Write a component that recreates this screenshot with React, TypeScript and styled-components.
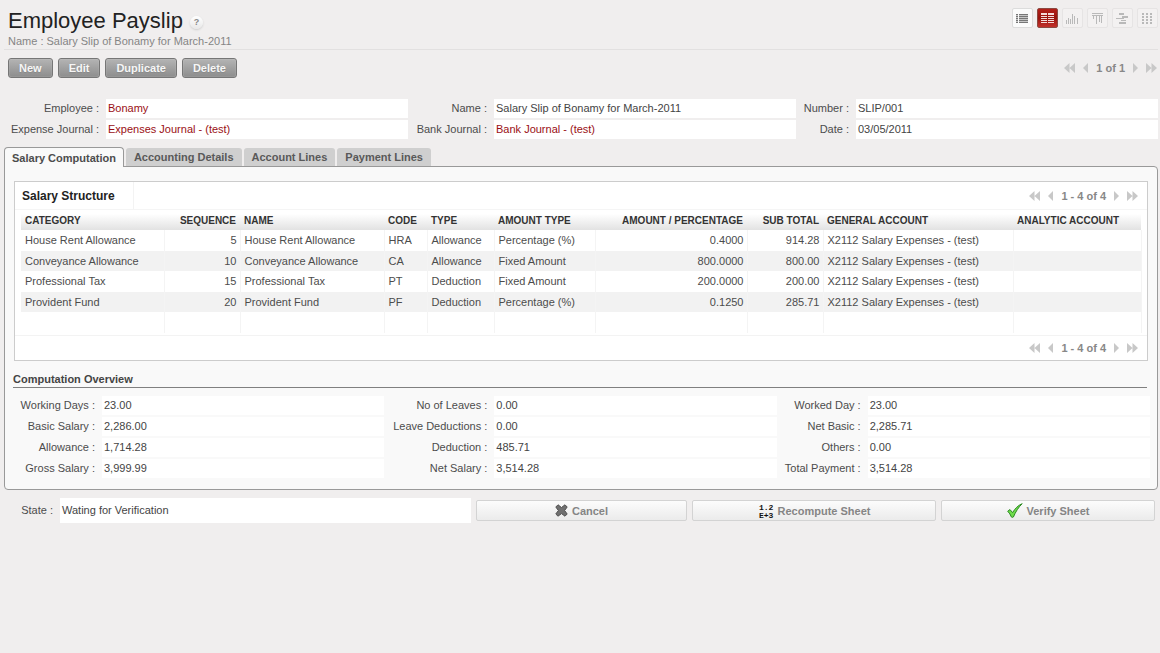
import React from "react";
import styled, { createGlobalStyle, css } from "styled-components";

const GlobalStyle = createGlobalStyle`
  *, *::before, *::after { box-sizing: border-box; }
  body {
    margin: 0;
    background: #f0eeee;
    color: #4c4c4c;
    font-family: "Liberation Sans", Arial, sans-serif;
    font-size: 11px;
    line-height: 13px;
  }
  button { font-family: inherit; cursor: pointer; }
`;

const Page = styled.main`
  display: flex;
  flex-direction: column;
  padding: 0 2px 0 4px;
`;

/* ---------- header ---------- */

const Header = styled.header`
  display: flex;
  justify-content: space-between;
  align-items: flex-start;
  height: 50px;
  padding: 8px 0 0 4px;
  border-bottom: 1px solid #e2e0e0;
`;

const TitleRow = styled.div`
  display: flex;
  align-items: center;
  gap: 7px;
`;

const Title = styled.h1`
  margin: 0;
  font-size: 22px;
  line-height: 26px;
  font-weight: 400;
  color: #222;
`;

const HelpButton = styled.button`
  width: 13px;
  height: 13px;
  margin-top: 2px;
  padding: 0;
  border: 0;
  border-radius: 50%;
  background: linear-gradient(#fff, #e8e8e8);
  box-shadow: 0 1px 2px #ccc;
  color: #888;
  font-size: 9px;
  font-weight: 700;
  line-height: 13px;
`;

const Subtitle = styled.p`
  margin: 0;
  line-height: 14px;
  color: #858585;
`;

const ViewSwitch = styled.nav`
  display: flex;
  gap: 4px;
`;

const ViewButton = styled.button<{ $state: "normal" | "active" | "disabled" }>`
  display: flex;
  align-items: center;
  justify-content: center;
  width: 21px;
  height: 20px;
  padding: 0;
  border: 1px solid #e6e4e4;
  border-radius: 2px;
  background: #f3f1f1;
  color: #b9b9b9;
  ${(p) =>
    p.$state === "normal" &&
    css`
      border-color: #dcdcdc;
      background: #fbfbfb;
      color: #777;
    `}
  ${(p) =>
    p.$state === "active" &&
    css`
      border-color: #8c4a42;
      background: linear-gradient(#b3201a, #98140e 50%, #c3302a);
      color: #f4dcda;
    `}
`;

/* ---------- action bar ---------- */

const ActionBar = styled.div`
  display: flex;
  justify-content: space-between;
  align-items: center;
  height: 20px;
  margin: 8px 0 21px;
  padding: 0 1px 0 4px;
`;

const Actions = styled.div`
  display: flex;
  gap: 5px;
`;

const ActionButton = styled.button`
  height: 20px;
  padding: 0 10px;
  border: 1px solid #767676;
  border-radius: 3px;
  background: linear-gradient(#b4b4b4, #8d8d8d);
  box-shadow: inset 0 0 1px #ddd;
  color: #f6f6f6;
  font-size: 11px;
  font-weight: 700;
  line-height: 18px;
  text-shadow: 0 1px 1px #888;
`;

const PagerBar = styled.div<{ $inset?: boolean }>`
  display: flex;
  align-items: center;
  justify-content: flex-end;
  gap: 8px;
  height: 24px;
  color: #888;
  font-weight: 700;
  padding-right: ${(p) => (p.$inset ? 9 : 0)}px;
`;

const PagerButton = styled.button`
  display: flex;
  padding: 0;
  border: 0;
  background: none;
  color: #c8c8c8;
`;

/* ---------- fields ---------- */

const FieldGrid = styled.div<{ $columns: string }>`
  display: grid;
  grid-template-columns: ${(p) => p.$columns};
  row-gap: 2px;
`;

const FieldLabel = styled.label`
  display: flex;
  align-items: center;
  justify-content: flex-end;
  padding-right: 7px;
  white-space: nowrap;
`;

const FieldValue = styled.output<{ $tall?: boolean }>`
  display: block;
  flex: 1;
  height: ${(p) => (p.$tall ? 25 : 19)}px;
  padding-left: 2px;
  background: #fff;
  line-height: ${(p) => (p.$tall ? 25 : 19)}px;
  color: #444;
  white-space: nowrap;
`;

const RecordLink = styled.a`
  color: #9a0f14;
  text-decoration: none;
`;

/* ---------- tabs ---------- */

const TabList = styled.div`
  display: flex;
  align-items: flex-end;
  gap: 2px;
  height: 20px;
  margin-top: 8px;
  position: relative;
`;

const Tab = styled.button<{ $active?: boolean }>`
  height: 18px;
  padding: 0 8px;
  border: 0;
  border-radius: 3px 3px 0 0;
  background: #cfcfcf;
  color: #595959;
  font-size: 11px;
  font-weight: 700;
  line-height: 18px;
  margin-bottom: 1px;
  ${(p) =>
    p.$active &&
    css`
      height: 20px;
      margin-bottom: 0;
      padding: 0 7px;
      border: 1px solid #999;
      border-bottom: 0;
      border-radius: 4px 4px 0 0;
      background: #f9f9f9;
      color: #4c4c4c;
      line-height: 20px;
    `}
`;

const TabPanel = styled.section`
  margin: -1px 0 0;
  padding: 14px 7px 11px 8px;
  border: 1px solid #999;
  border-radius: 0 4px 4px 4px;
  background: #f9f9f9;
`;

/* ---------- list ---------- */

const ListBox = styled.div`
  margin: 0 2px 0 1px;
  border: 1px solid #ccc;
  background: #fff;
`;

const ListHead = styled.div`
  display: flex;
  height: 28px;
  border-bottom: 1px solid #f5f5f5;
`;

const ListTitle = styled.h2`
  width: 119px;
  margin: 0;
  padding-left: 7px;
  border-right: 1px solid #f3f3f3;
  font-size: 12px;
  line-height: 28px;
  color: #222;
`;

const ListPager = styled.div`
  flex: 1;
  padding-top: 2px;
`;

const ListFoot = styled.div`
  margin-top: 2px;
  border-top: 1px solid #f3f3f3;
`;

const TableWrap = styled.div`
  padding: 0 6px;
`;

const Table = styled.table`
  width: 100%;
  table-layout: fixed;
  border-collapse: collapse;
`;

const HeadRow = styled.tr`
  height: 20px;
  background: linear-gradient(#fff 20%, #e2e2e2);
`;

const HeadCell = styled.th<{ $numeric?: boolean }>`
  padding: 2px 4px 0;
  font-size: 10px;
  line-height: 18px;
  text-align: ${(p) => (p.$numeric ? "right" : "left")};
  white-space: nowrap;
  color: #333;
`;

const BodyRow = styled.tr`
  height: 21px;
  &:nth-child(even) {
    height: 20px;
    background: #f2f2f2;
  }
`;

const Cell = styled.td<{ $numeric?: boolean }>`
  padding: 0 3px 0 4px;
  border-right: 1px solid #f4f4f4;
  line-height: 20px;
  vertical-align: top;
  text-align: ${(p) => (p.$numeric ? "right" : "left")};
  white-space: nowrap;
`;

const SectionTitle = styled.h3`
  margin: 11px 3px 8px 0;
  padding-bottom: 1px;
  border-bottom: 1px solid #808080;
  font-size: 11px;
  line-height: 14px;
  color: #444;
`;

/* ---------- footer ---------- */

const StateBar = styled.footer`
  display: grid;
  grid-template-columns: 467fr 211fr 244fr 214fr;
  column-gap: 5px;
  align-items: center;
  margin: 8px 3px 0 0;
`;

const StateField = styled.div`
  display: flex;
  & > label { width: 56px; }
`;

const StateButton = styled.button`
  display: flex;
  align-items: center;
  justify-content: center;
  gap: 4px;
  height: 21px;
  padding: 0;
  border: 1px solid #d3d3d3;
  border-radius: 2px;
  background: linear-gradient(#fcfcfc, #ebebeb);
  color: #858585;
  font-size: 11px;
  font-weight: 700;
`;

/* ---------- icons ---------- */

const ArrowDouble = ({ flip }: { flip?: boolean }) => (
  <svg width="11" height="10" viewBox="0 0 11 10" fill="currentColor" aria-hidden="true">
    <path d={flip ? "M0 0L5.500 5L0 10ZM5.500 0L11 5L5.500 10Z" : "M11 0L5.500 5L11 10ZM5.500 0L0 5L5.500 10Z"} />
  </svg>
);

const ArrowSingle = ({ flip }: { flip?: boolean }) => (
  <svg width="5" height="10" viewBox="0 0 5 10" fill="currentColor" aria-hidden="true">
    <path d={flip ? "M0 0L5 5L0 10Z" : "M5 0L0 5L5 10Z"} />
  </svg>
);

const viewPaths: Record<string, string> = {
  List: "M0 1h2v1H0zM0 3h2v1H0zM0 5h2v1H0zM0 7h2v1H0zM0 9h2v1H0zM3 1h9v1H3zM3 3h9v1H3zM3 5h9v1H3zM3 7h9v1H3zM3 9h9v1H3z",
  Form: "M0 0h6v2H0zM0 3h6v1H0zM0 5h6v1H0zM0 7h6v1H0zM0 9h6v1H0zM7 0h6v2H7zM7 3h6v1H7zM7 5h6v1H7zM7 7h6v1H7zM7 9h6v1H7z",
  Graph: "M0 7h1v4H0zM2 5h1v6H2zM4 6h1v5H4zM6 1h1v10H6zM8 3h1v8H8zM11 5h1v6h-1z",
  Calendar: "M1 0h11v1H1zM1 2h11v1H1zM2 3h1v3H2zM5 3h1v8H5zM8 3h1v6H8zM10 3h1v7h-1z",
  Gantt: "M3 0h5v2H3zM6 3h6v2H6zM0 5h8v1H0zM5 7h5v1H5zM3 9h7v2H3z",
  Kanban: "M1 0h2v2H1zM5 0h2v2H5zM9 0h2v2H9zM1 3h2v2H1zM5 3h2v2H5zM9 3h2v2H9zM1 6h2v2H1zM5 6h2v2H5zM9 6h2v2H9zM1 9h2v2H1zM5 9h2v2H5zM9 9h2v2H9z",
};

const ViewIcon = ({ name }: { name: string }) => (
  <svg width="13" height="11" viewBox="0 0 13 11" fill="currentColor" aria-hidden="true">
    {name === "List" && <path d="M0 1h2v9H0zM3 1h9v9H3z" opacity=".4" />}
    <path d={viewPaths[name]} />
  </svg>
);

const CancelIcon = () => (
  <svg width="13" height="13" viewBox="0 0 13 13" aria-hidden="true">
    <path
      d="M3 .8L6.5 3.5L10 .8L12.2 3L9.6 6.5L12.2 10L10 12.2L6.5 9.6L3 12.2L.8 10L3.4 6.5L.8 3Z"
      fill="#707070"
      stroke="#505050"
      strokeLinejoin="round"
    />
  </svg>
);

const NumberIcon = () => (
  <svg width="16" height="17" viewBox="0 0 16 17" aria-hidden="true">
    <g fill="#111" fontFamily="'Liberation Mono', monospace" fontSize="8" fontWeight="700">
      <text x="1" y="8">1.2</text>
      <text x="1" y="16">E+3</text>
    </g>
  </svg>
);

const CheckIcon = () => (
  <svg width="16" height="15" viewBox="0 0 16 15" aria-hidden="true">
    <path
      d="M.7 8.2L3 6.6L5.6 9.6C8 5.6 11 2.4 15.2.7C11.500 4.200 8.600 8.800 6.400 14C5.800 14.500 4.900 14.500 4.400 14C3.500 11.800 2.300 9.800.7 8.200Z"
      fill="#6fdc4b"
      stroke="#2c8a22"
      strokeLinejoin="round"
    />
  </svg>
);

/* ---------- data ---------- */

type Field = { label: string; value: string; link?: boolean };

const recordFields: Field[] = [
  { label: "Employee", value: "Bonamy", link: true },
  { label: "Name", value: "Salary Slip of Bonamy for March-2011" },
  { label: "Number", value: "SLIP/001" },
  { label: "Expense Journal", value: "Expenses Journal - (test)", link: true },
  { label: "Bank Journal", value: "Bank Journal - (test)", link: true },
  { label: "Date", value: "03/05/2011" },
];

const overviewFields: Field[] = [
  { label: "Working Days", value: "23.00" },
  { label: "No of Leaves", value: "0.00" },
  { label: "Worked Day", value: "23.00" },
  { label: "Basic Salary", value: "2,286.00" },
  { label: "Leave Deductions", value: "0.00" },
  { label: "Net Basic", value: "2,285.71" },
  { label: "Allowance", value: "1,714.28" },
  { label: "Deduction", value: "485.71" },
  { label: "Others", value: "0.00" },
  { label: "Gross Salary", value: "3,999.99" },
  { label: "Net Salary", value: "3,514.28" },
  { label: "Total Payment", value: "3,514.28" },
];

const columns = [
  { title: "CATEGORY", width: 143 },
  { title: "SEQUENCE", width: 76, numeric: true },
  { title: "NAME", width: 144 },
  { title: "CODE", width: 43 },
  { title: "TYPE", width: 67 },
  { title: "AMOUNT TYPE", width: 101 },
  { title: "AMOUNT / PERCENTAGE", width: 152, numeric: true },
  { title: "SUB TOTAL", width: 76, numeric: true },
  { title: "GENERAL ACCOUNT", width: 190 },
  { title: "ANALYTIC ACCOUNT", width: 128 },
];

const account = "X2112 Salary Expenses - (test)";
const rows = [
  ["House Rent Allowance", "5", "House Rent Allowance", "HRA", "Allowance", "Percentage (%)", "0.4000", "914.28", account, ""],
  ["Conveyance Allowance", "10", "Conveyance Allowance", "CA", "Allowance", "Fixed Amount", "800.0000", "800.00", account, ""],
  ["Professional Tax", "15", "Professional Tax", "PT", "Deduction", "Fixed Amount", "200.0000", "200.00", account, ""],
  ["Provident Fund", "20", "Provident Fund", "PF", "Deduction", "Percentage (%)", "0.1250", "285.71", account, ""],
  ["", "", "", "", "", "", "", "", "", ""],
];

const slug = (label: string) => label.toLowerCase().replace(/ /g, "-");

const Fields = ({ items, columns: template }: { items: Field[]; columns: string }) => (
  <FieldGrid $columns={template}>
    {items.map((f) => (
      <React.Fragment key={f.label}>
        <FieldLabel htmlFor={slug(f.label)}>{f.label} :</FieldLabel>
        <FieldValue id={slug(f.label)}>
          {f.link ? <RecordLink href="#">{f.value}</RecordLink> : f.value}
        </FieldValue>
      </React.Fragment>
    ))}
  </FieldGrid>
);

const Pager = ({ text, inset }: { text: string; inset?: boolean }) => (
  <PagerBar $inset={inset}>
    <PagerButton aria-label="First"><ArrowDouble /></PagerButton>
    <PagerButton aria-label="Previous"><ArrowSingle /></PagerButton>
    <span>{text}</span>
    <PagerButton aria-label="Next"><ArrowSingle flip /></PagerButton>
    <PagerButton aria-label="Last"><ArrowDouble flip /></PagerButton>
  </PagerBar>
);

export default function App() {
  return (
    <Page>
      <GlobalStyle />
      <Header>
        <div>
          <TitleRow>
            <Title>Employee Payslip</Title>
            <HelpButton aria-label="Help">?</HelpButton>
          </TitleRow>
          <Subtitle>Name : Salary Slip of Bonamy for March-2011</Subtitle>
        </div>
        <ViewSwitch>
          {Object.keys(viewPaths).map((name, i) => (
            <ViewButton
              key={name}
              aria-label={name}
              $state={i === 0 ? "normal" : i === 1 ? "active" : "disabled"}
            >
              <ViewIcon name={name} />
            </ViewButton>
          ))}
        </ViewSwitch>
      </Header>

      <ActionBar>
        <Actions>
          {["New", "Edit", "Duplicate", "Delete"].map((a) => (
            <ActionButton key={a}>{a}</ActionButton>
          ))}
        </Actions>
        <Pager text="1 of 1" />
      </ActionBar>

      <Fields items={recordFields} columns="102px 1fr 86px 1fr 60px 1fr" />

      <TabList role="tablist">
        <Tab role="tab" aria-selected="true" $active>Salary Computation</Tab>
        <Tab role="tab">Accounting Details</Tab>
        <Tab role="tab">Account Lines</Tab>
        <Tab role="tab">Payment Lines</Tab>
      </TabList>

      <TabPanel role="tabpanel">
        <ListBox>
          <ListHead>
            <ListTitle>Salary Structure</ListTitle>
            <ListPager><Pager text="1 - 4 of 4" inset /></ListPager>
          </ListHead>
          <TableWrap>
            <Table>
              <colgroup>
                {columns.map((c) => (
                  <col key={c.title} width={c.width} />
                ))}
              </colgroup>
              <thead>
                <HeadRow>
                  {columns.map((c) => (
                    <HeadCell key={c.title} scope="col" $numeric={c.numeric}>{c.title}</HeadCell>
                  ))}
                </HeadRow>
              </thead>
              <tbody>
                {rows.map((row, r) => (
                  <BodyRow key={r}>
                    {row.map((value, c) => (
                      <Cell key={c} $numeric={columns[c].numeric}>{value}</Cell>
                    ))}
                  </BodyRow>
                ))}
              </tbody>
            </Table>
          </TableWrap>
          <ListFoot>
            <Pager text="1 - 4 of 4" inset />
          </ListFoot>
        </ListBox>

        <SectionTitle>Computation Overview</SectionTitle>
        <Fields items={overviewFields} columns="89px 1fr 110px 1fr 91px 1fr" />
      </TabPanel>

      <StateBar>
        <StateField>
          <FieldLabel htmlFor="state">State :</FieldLabel>
          <FieldValue id="state" $tall>Wating for Verification</FieldValue>
        </StateField>
        <StateButton><CancelIcon />Cancel</StateButton>
        <StateButton><NumberIcon />Recompute Sheet</StateButton>
        <StateButton><CheckIcon />Verify Sheet</StateButton>
      </StateBar>
    </Page>
  );
}
